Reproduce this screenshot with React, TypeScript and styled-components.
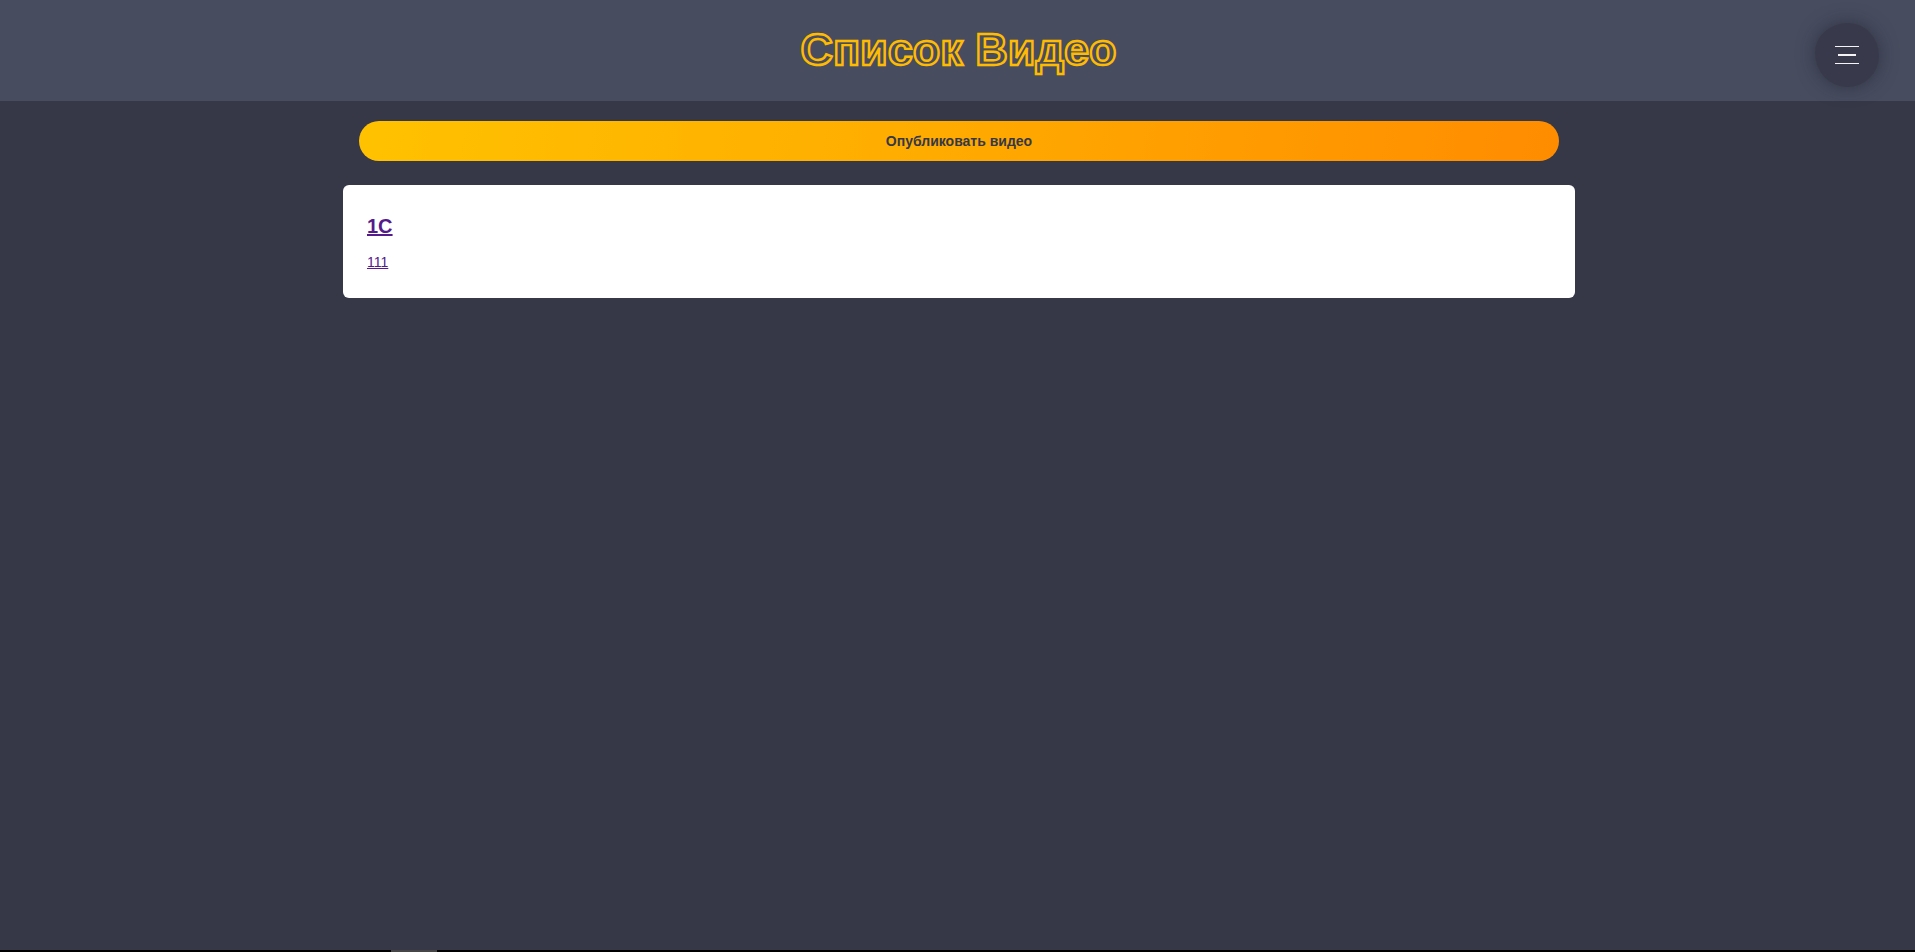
import styled, { createGlobalStyle } from 'styled-components';

const GlobalStyle = createGlobalStyle`
  html, body {
    margin: 0;
    padding: 0;
    background: #363747;
    font-family: "Liberation Sans", Arial, sans-serif;
  }
`

const Page = styled.div`
  min-height: 100vh;
  display: flex;
  flex-direction: column;
  background: #363747;
`

const Header = styled.header`
  position: relative;
  height: 101px;
  background: #474c5f;
  display: flex;
  align-items: center;
  justify-content: center;
`

const Title = styled.h1`
  margin: 0 0 2px 2px;
  font-size: 45px;
  font-weight: bold;
  color: transparent;
  -webkit-text-stroke: 2.4px #ffbb00;
`

const MenuButton = styled.button`
  position: absolute;
  top: 23px;
  right: 36px;
  width: 64px;
  height: 64px;
  border: none;
  padding: 0;
  border-radius: 52% 48% 50% 50% / 46% 52% 48% 54%;
  background: #383a4b;
  box-shadow: 0 0 18px rgba(30, 32, 44, 0.55);
  display: flex;
  flex-direction: column;
  align-items: center;
  justify-content: center;
  gap: 7px;
  cursor: pointer;
`

const Line = styled.span<{ $short?: boolean }>`
  display: block;
  width: ${p => (p.$short ? '18px' : '24px')};
  height: 1.5px;
  background: #f4f4f6;
`

const Main = styled.main`
  display: flex;
  flex-direction: column;
  align-items: center;
  padding: 20px 0 0 3px;
`

const PublishButton = styled.button`
  width: 1200px;
  height: 40px;
  border: none;
  border-radius: 20px;
  background: linear-gradient(100deg, #ffc200 0%, #ffad00 45%, #ff8c00 100%);
  color: #363747;
  font-family: "Liberation Sans", Arial, sans-serif;
  font-size: 14px;
  font-weight: bold;
  cursor: pointer;
`

const List = styled.div`
  margin-top: 24px;
  width: 1232px;
  display: flex;
  flex-direction: column;
  gap: 16px;
`

const Card = styled.div`
  box-sizing: border-box;
  background: #fff;
  border-radius: 6px;
  padding: 30px 24px 28px;
  display: flex;
  flex-direction: column;
  align-items: flex-start;
  gap: 16px;
`

const CardTitle = styled.a`
  font-size: 20px;
  font-weight: bold;
  color: #551a8b;
  text-decoration: underline;
`

const CardLink = styled.a`
  font-size: 14px;
  color: #551a8b;
  text-decoration: underline;
`

const Scrollbar = styled.div`
  margin-top: auto;
  height: 2px;
  background: #000;
  display: flex;
`

const Thumb = styled.div`
  margin-left: 391px;
  width: 46px;
  background: #464646;
`

const videos = [{ id: 1, title: '1C', link: '111' }];

const App = () => {
  return (
    <Page>
      <GlobalStyle />
      <Header>
        <Title>Список Видео</Title>
        <MenuButton aria-label="menu">
          <Line />
          <Line $short />
          <Line />
        </MenuButton>
      </Header>
      <Main>
        <PublishButton>Опубликовать видео</PublishButton>
        <List>
          {videos.map(v => (
            <Card key={v.id}>
              <CardTitle href="#">{v.title}</CardTitle>
              <CardLink href="#">{v.link}</CardLink>
            </Card>
          ))}
        </List>
      </Main>
      <Scrollbar>
        <Thumb />
      </Scrollbar>
    </Page>
  );
}

export default App;
